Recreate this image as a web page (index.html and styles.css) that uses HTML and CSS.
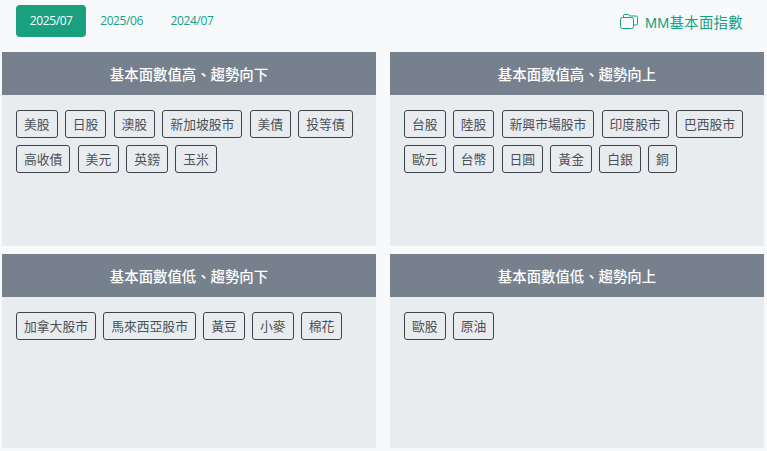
FILE: index.html
```html
<!DOCTYPE html>
<html lang="zh-Hant">
<head>
<meta charset="utf-8">
<title>MM基本面指數</title>
<link rel="stylesheet" href="styles.css">
</head>
<body>
<header class="topbar">
  <nav class="tabs">
    <a class="tab active">2025/07</a>
    <a class="tab">2025/06</a>
    <a class="tab">2024/07</a>
  </nav>
  <a class="index-link">
    <svg class="icon" width="18" height="15" viewBox="0 0 18 15" fill="none" stroke="currentColor" stroke-width="1">
      <path d="M3.5 3.5V1.5a1 1 0 0 1 1-1h4l1.5 1.5h6a1.5 1.5 0 0 1 1.5 1.5v6a1.5 1.5 0 0 1-1.5 1.5h-2.5"/>
      <rect x="0.5" y="3.5" width="13" height="11" rx="2"/>
    </svg>
    <span>MM基本面指數</span>
  </a>
</header>
<main class="grid">
  <section class="panel">
    <h2 class="panel-title">基本面數值高、趨勢向下</h2>
    <div class="chips">
      <span class="chip">美股</span><span class="chip">日股</span><span class="chip">澳股</span><span class="chip">新加坡股市</span><span class="chip">美債</span><span class="chip">投等債</span><span class="chip">高收債</span><span class="chip">美元</span><span class="chip">英鎊</span><span class="chip">玉米</span>
    </div>
  </section>
  <section class="panel">
    <h2 class="panel-title">基本面數值高、趨勢向上</h2>
    <div class="chips">
      <span class="chip">台股</span><span class="chip">陸股</span><span class="chip">新興市場股市</span><span class="chip">印度股市</span><span class="chip">巴西股市</span><span class="chip">歐元</span><span class="chip">台幣</span><span class="chip">日圓</span><span class="chip">黃金</span><span class="chip">白銀</span><span class="chip">銅</span>
    </div>
  </section>
  <section class="panel">
    <h2 class="panel-title">基本面數值低、趨勢向下</h2>
    <div class="chips">
      <span class="chip">加拿大股市</span><span class="chip">馬來西亞股市</span><span class="chip">黃豆</span><span class="chip">小麥</span><span class="chip">棉花</span>
    </div>
  </section>
  <section class="panel">
    <h2 class="panel-title">基本面數值低、趨勢向上</h2>
    <div class="chips">
      <span class="chip">歐股</span><span class="chip">原油</span>
    </div>
  </section>
</main>
</body>
</html>
```
FILE: styles.css
```css
* { box-sizing: border-box; }
html, body { height: 100%; }
body {
  margin: 0;
  background: #f8f9fa;
  color: #343a40;
  font-family: "Noto Sans CJK TC", "Liberation Sans", sans-serif;
  font-size: 13px;
  overflow: hidden;
}
.topbar {
  display: flex;
  justify-content: space-between;
  align-items: center;
  height: 52px;
  padding: 5px 24px 15px 16px;
}
.tabs { display: flex; }
.tab {
  display: block;
  width: 70.4px;
  height: 32px;
  line-height: 32px;
  text-align: center;
  font-family: "Open Sans", sans-serif;
  font-size: 12px;
  letter-spacing: -0.4px;
  color: #16a085;
  border-radius: 4px;
}
.tab.active { background: #18a07f; color: #fff; }
.index-link {
  display: flex;
  align-items: center;
  gap: 7px;
  color: #16a085;
  font-family: "Liberation Sans", "Noto Sans CJK TC", sans-serif;
  font-size: 14.4px;
  letter-spacing: 0.3px;
}
.icon { display: block; }
.grid {
  display: grid;
  grid-template-columns: 374px 374px;
  grid-template-rows: 194px 194px;
  column-gap: 14px;
  row-gap: 8px;
  padding-left: 2px;
}
.panel { background: #e9ecef; }
.panel-title {
  margin: 0;
  height: 43px;
  line-height: 43px;
  text-align: center;
  background: #77818d;
  color: #fff;
  font-size: 14.4px;
  font-weight: 500;
}
.chips {
  display: flex;
  flex-wrap: wrap;
  gap: 7px 7.2px;
  padding: 15px 14px;
}
.chip {
  display: block;
  height: 28px;
  line-height: 26px;
  padding: 0 7px;
  border: 1px solid #3d434a;
  border-radius: 3px;
  font-size: 12.8px;
  color: #4a5057;
}
```
